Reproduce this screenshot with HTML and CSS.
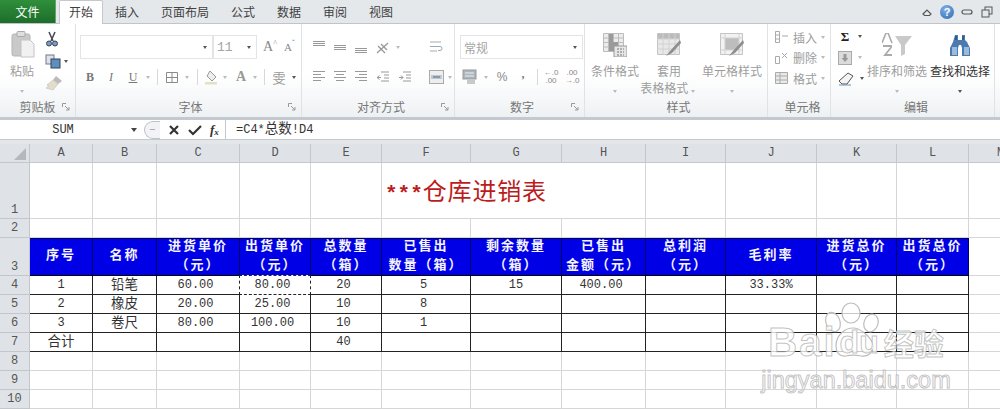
FILE: index.html

```html
<!DOCTYPE html>
<html lang="zh-CN">
<head>
<meta charset="UTF-8">
<title>仓库进销表</title>
<link rel="stylesheet" href="styles.css">
</head>
<body>

<div class="app">

    <!-- tabs -->
    <div class="tabbar">
        <div class="tab-file">文件</div>
        <div class="tab active">开始</div>
        <div class="tab">插入</div>
        <div class="tab">页面布局</div>
        <div class="tab">公式</div>
        <div class="tab">数据</div>
        <div class="tab">审阅</div>
        <div class="tab">视图</div>
        <div class="win-btns">
            <svg width="14" height="12" viewBox="0 0 14 12"><path d="M3 8l4-4 4 4-1.500 1.500H4.500z" fill="none" stroke="#555" stroke-width="1.200"/></svg>
            <div class="help">?</div>
            <svg width="14" height="12" viewBox="0 0 14 12"><rect x="2" y="4" width="10" height="4" rx="2" fill="none" stroke="#555" stroke-width="1.200"/></svg>
            <svg width="14" height="12" viewBox="0 0 14 12"><rect x="5" y="1" width="7" height="7" fill="none" stroke="#555"/><rect x="2" y="4" width="7" height="7" fill="#e4e8eb" stroke="#555"/></svg>
        </div>
    </div>

    <!-- ribbon -->
    <div class="ribbon">

        <div class="group g-clip">
            <div class="group-body">
                <div class="big big-paste">
                    <div class="big-icon">
                        <svg width="24" height="27" viewBox="0 0 24 27"><rect x="1" y="3" width="18" height="22" rx="2" fill="#c9c9c9" stroke="#b5b5b5"/><rect x="6" y="0.500" width="8" height="5" rx="1" fill="#dedede" stroke="#aaa"/><path d="M10 9h9l4 4v13H10z" fill="#f1f1f1" stroke="#c4c4c4"/></svg>
                    </div>
                    <div>粘贴</div>
                    <div class="caret-line"><span class="caret"></span></div>
                </div>
                <div class="clip-tools">
                    <div class="clip-row">
                        <svg width="14" height="16" viewBox="0 0 14 16"><path d="M4 1l4 9M10 1L6 10" stroke="#445" stroke-width="1.500" fill="none"/><circle cx="4" cy="12.500" r="2.500" fill="#7d9cc4" stroke="#345"/><circle cx="10" cy="12.500" r="2.500" fill="#7d9cc4" stroke="#345"/></svg>
                    </div>
                    <div class="clip-row">
                        <svg width="16" height="15" viewBox="0 0 16 15"><rect x="1" y="1" width="8" height="9" fill="#dde3ea" stroke="#778"/><rect x="6" y="5" width="9" height="9" fill="#5f8fc0" stroke="#345"/></svg>
                        <span class="caret dark"></span>
                    </div>
                    <div class="clip-row">
                        <svg width="18" height="16" viewBox="0 0 18 16"><path d="M11 1l6 5-4 3-5-4z" fill="#bbb"/><path d="M8 5l5 4-5 6-7-2 3-2-2-1z" fill="#e2dccb" stroke="#c4c0b2" stroke-width=".6"/></svg>
                    </div>
                </div>
            </div>
            <div class="group-label"><span></span><span>剪贴板</span><svg class="launcher" width="8" height="8" viewBox="0 0 8 8"><path d="M.5 4V.5H4M3 3l4 4M7 4v3H4" fill="none" stroke="#999"/></svg></div>
        </div>

        <div class="group g-font">
            <div class="group-body stack">
                <div class="row row-top">
                    <div class="combo c-font"><span class="caret dark"></span></div>
                    <div class="combo c-size"><span class="combo-text">11</span><span class="caret dark"></span></div>
                    <span class="glyph grow-a">A<sup>^</sup></span>
                    <span class="glyph shrink-a">A<sup>ˇ</sup></span>
                </div>
                <div class="row row-bot">
                    <span class="cell w20 serif-b">B</span>
                    <span class="cell w22 serif-i">I</span>
                    <span class="cell w22 serif-u">U</span>
                    <span class="cell w8"><span class="caret"></span></span>
                    <span class="cell w10"><span class="sep"></span></span>
                    <span class="cell w20"><svg width="14" height="13" viewBox="0 0 14 13"><path d="M1.500 1.500h11v10h-11zM7 1.500v10M1.500 6.500h11" fill="none" stroke="#8a8a8a"/></svg></span>
                    <span class="cell w10"><span class="caret"></span></span>
                    <span class="cell w10"><span class="sep"></span></span>
                    <span class="cell w18"><svg width="15" height="15" viewBox="0 0 15 15"><path d="M6 1l6 6-4 4-5-5z" fill="#eee" stroke="#999"/><rect x="1" y="12" width="12" height="2.500" fill="#e3e0c4"/></svg></span>
                    <span class="cell w10"><span class="caret"></span></span>
                    <span class="cell w22 a-big">A</span>
                    <span class="cell w6"><span class="caret"></span></span>
                    <span class="cell w12"><span class="sep"></span></span>
                    <span class="cell w18 wen">雯</span>
                    <span class="cell w12"><span class="caret dark"></span></span>
                </div>
            </div>
            <div class="group-label"><span></span><span>字体</span><svg class="launcher" width="8" height="8" viewBox="0 0 8 8"><path d="M.5 4V.5H4M3 3l4 4M7 4v3H4" fill="none" stroke="#999"/></svg></div>
        </div>

        <div class="group g-align">
            <div class="group-body">
                <div class="stack align-main">
                    <div class="row row-top">
                        <span class="cell w21"><span class="lines l-top"><i></i><i></i><i></i></span></span>
                        <span class="cell w21"><span class="lines l-mid"><i></i><i></i><i></i></span></span>
                        <span class="cell w22"><span class="lines l-bot"><i></i><i></i><i></i></span></span>
                        <span class="cell w22"><svg width="16" height="13" viewBox="0 0 16 13"><path d="M2 12L13 2M3 5l7 7M6 3l6 6" fill="none" stroke="#999" stroke-width="1.300"/></svg></span>
                        <span class="cell w8"><span class="caret"></span></span>
                    </div>
                    <div class="row row-bot">
                        <span class="cell w21"><span class="lines full"><i></i><i class="s"></i><i></i><i class="s"></i></span></span>
                        <span class="cell w21"><span class="lines full center"><i></i><i class="s"></i><i></i><i class="s"></i></span></span>
                        <span class="cell w22"><span class="lines full right"><i></i><i class="s"></i><i></i><i class="s"></i></span></span>
                        <span class="cell w22"><svg width="14" height="13" viewBox="0 0 14 13"><path d="M5 1h8M8 4h5M8 7h5M5 10h8M1 6.500h4M3.500 4.500L1 6.500l2.500 2" fill="none" stroke="#999"/></svg></span>
                        <span class="cell w21"><svg width="14" height="13" viewBox="0 0 14 13"><path d="M5 1h8M8 4h5M8 7h5M5 10h8M1 6.500h4M3 4.500l2 2-2 2" fill="none" stroke="#999"/></svg></span>
                    </div>
                </div>
                <span class="vsep"></span>
                <div class="stack align-side">
                    <div class="row row-top">
                        <span class="cell w20"><svg width="14" height="14" viewBox="0 0 14 14"><path d="M1 2h11M1 11h7" stroke="#aaa" fill="none"/><path d="M1 6.500h10a2 2 0 0 1 0 4H9" stroke="#9ab" fill="none"/></svg></span>
                    </div>
                    <div class="row row-bot">
                        <span class="cell w20"><svg width="15" height="14" viewBox="0 0 15 14"><rect x=".5" y=".5" width="14" height="13" fill="#eee" stroke="#aaa"/><rect x="2" y="5" width="11" height="4" fill="#b9c9d6"/><path d="M4 7h7" stroke="#667"/></svg></span>
                        <span class="cell w8"><span class="caret"></span></span>
                    </div>
                </div>
            </div>
            <div class="group-label"><span></span><span>对齐方式</span><svg class="launcher" width="8" height="8" viewBox="0 0 8 8"><path d="M.5 4V.5H4M3 3l4 4M7 4v3H4" fill="none" stroke="#999"/></svg></div>
        </div>

        <div class="group g-num">
            <div class="group-body stack">
                <div class="row row-top">
                    <div class="combo c-num"><span class="combo-text cjk">常规</span><span class="caret dark"></span></div>
                </div>
                <div class="row row-bot">
                    <span class="cell w20"><svg width="16" height="16" viewBox="0 0 16 16"><rect x="1" y="1" width="13" height="9" fill="#aab6bd" stroke="#999"/><path d="M3 4h9M3 7h9" stroke="#eee"/><rect x="5" y="10" width="8" height="5" fill="#c9c9c9"/></svg></span>
                    <span class="cell w12"><span class="caret"></span></span>
                    <span class="cell w20 percent">%</span>
                    <span class="cell w22 comma">,</span>
                    <span class="cell w6"><span class="sep"></span></span>
                    <span class="cell w22 dec">←.0<br>.00</span>
                    <span class="cell w20 dec">.00<br>→.0</span>
                </div>
            </div>
            <div class="group-label"><span></span><span>数字</span><svg class="launcher" width="8" height="8" viewBox="0 0 8 8"><path d="M.5 4V.5H4M3 3l4 4M7 4v3H4" fill="none" stroke="#999"/></svg></div>
        </div>

        <div class="group g-style">
            <div class="group-body">
                <div class="big b50">
                    <div class="big-icon">
                        <svg width="24" height="24" viewBox="0 0 24 24"><path d="M.5.500h20v18H.5zM.5 5h20M.5 9.500h20M.5 14h20M5.500.5v18M10.500.5v18M15.500.5v18" fill="#ececec" stroke="#bcbcbc"/><rect x="6" y="1" width="4" height="8" fill="#9a9a9a"/><rect x="6" y="9" width="9" height="9" fill="#9a9a9a"/><rect x="11" y="13" width="13" height="11" fill="#e6e6e6" stroke="#999"/><path d="M14 16h7M14 19h7M14 22h7" stroke="#777" stroke-dasharray="2 1"/></svg>
                    </div>
                    <div>条件格式</div>
                    <div class="caret-line"><span class="caret"></span></div>
                </div>
                <div class="big b58">
                    <div class="big-icon">
                        <svg width="24" height="24" viewBox="0 0 24 24"><path d="M.5.500h22v21H.5z" fill="#e8e8e8" stroke="#c4c4c4"/><rect x="1" y="1" width="21" height="5" fill="#bbb"/><path d="M.5 6h22M.5 11h22M.5 16h22M6 .5v21M12 .5v21M18 .5v21" fill="none" stroke="#d2d2d2"/><path d="M23 7L13 18l-4 5 6-3L24 10z" fill="#8e8e8e"/></svg>
                    </div>
                    <div>套用</div>
                    <div class="tight">表格格式 <span class="caret"></span></div>
                </div>
                <div class="big b68">
                    <div class="big-icon">
                        <svg width="24" height="24" viewBox="0 0 24 24"><path d="M.5.500h22v21H.5z" fill="#f2f2f2" stroke="#c4c4c4"/><rect x="5" y="5" width="14" height="12" fill="#bdbdbd"/><path d="M.5 5h22M.5 17h22M5 .5v21M19 .5v21" fill="none" stroke="#d2d2d2"/><path d="M23 7L13 18l-4 5 6-3L24 10z" fill="#8e8e8e"/></svg>
                    </div>
                    <div>单元格样式</div>
                    <div class="caret-line"><span class="caret"></span></div>
                </div>
            </div>
            <div class="group-label solo">样式</div>
        </div>

        <div class="group g-cells">
            <div class="group-body stack cell-list">
                <div class="cell-row">
                    <svg width="14" height="12" viewBox="0 0 14 12"><path d="M.5.500h4v11h-4zM.5 4h4M.5 8h4M7 5h6" fill="none" stroke="#aaa"/></svg>
                    <span>插入</span><span class="caret"></span>
                </div>
                <div class="cell-row">
                    <svg width="14" height="12" viewBox="0 0 14 12"><path d="M.5 4.500h4v7h-4zM7 1l5 5M12 1L7 6" fill="none" stroke="#aaa"/></svg>
                    <span>删除</span><span class="caret"></span>
                </div>
                <div class="cell-row">
                    <svg width="14" height="12" viewBox="0 0 14 12"><path d="M.5.500h12v11H.5zM.5 4h12M.5 8h12M5 .5v11" fill="#e9e9e9" stroke="#aaa"/></svg>
                    <span>格式</span><span class="caret"></span>
                </div>
            </div>
            <div class="group-label solo">单元格</div>
        </div>

        <div class="group g-edit">
            <div class="group-body">
                <div class="stack edit-tools">
                    <div class="edit-row"><span class="sigma">Σ</span><span class="caret dark"></span></div>
                    <div class="edit-row">
                        <svg width="14" height="14" viewBox="0 0 14 14"><rect x=".5" y=".5" width="13" height="13" fill="#dcdcdc" stroke="#aaa"/><path d="M5.500 3h3v4h2L7 11 3.500 7h2z" fill="#999"/></svg>
                        <span class="caret"></span>
                    </div>
                    <div class="edit-row">
                        <svg width="16" height="14" viewBox="0 0 16 14"><path d="M10 1l5 3-6 8H4L1 9z" fill="#f4f4f4" stroke="#555"/><path d="M1 13h12" stroke="#6d8fb5"/></svg>
                        <span class="caret dark"></span>
                    </div>
                </div>
                <div class="big b60">
                    <div class="big-icon">
                        <svg width="30" height="24" viewBox="0 0 30 24"><path d="M13 3h17l-7 9v9l-4 2V12z" fill="#c9c9c9"/><path d="M0 10L4 0h2l4 10" fill="none" stroke="#aaa" stroke-width="1.600"/><path d="M1 13h8v1.500L3 22h7" fill="none" stroke="#aaa" stroke-width="1.800"/></svg>
                    </div>
                    <div>排序和筛选</div>
                    <div class="caret-line"><span class="caret"></span></div>
                </div>
                <div class="big b62 on">
                    <div class="big-icon">
                        <svg width="24" height="22" viewBox="0 0 24 22"><path d="M7 0h3v5h4V0h3v5l2 2 3 6v8h-8v-8l-1-3h-2l-1 3v8H2v-8l3-6z" fill="#4b7ab0"/><path d="M4 12h5v8H4zM16 12h5v8h-5z" fill="#9bbbdc"/><path d="M8 1v4M15 1v4" stroke="#1c3c66"/></svg>
                    </div>
                    <div>查找和选择</div>
                    <div class="caret-line"><span class="caret dark"></span></div>
                </div>
            </div>
            <div class="group-label solo">编辑</div>
        </div>
    </div>

    <!-- formula bar -->
    <div class="fbar">
        <div class="namebox"><span class="name-text">SUM</span><span class="caret big-caret"></span></div>
        <div class="fbtns">
            <span class="fround"><i></i></span>
            <svg width="12" height="12" viewBox="0 0 12 12"><path d="M2 2l8 8M10 2l-8 8" stroke="#333" stroke-width="2.200"/></svg>
            <svg width="14" height="12" viewBox="0 0 14 12"><path d="M1 6l4 4 8-8" fill="none" stroke="#333" stroke-width="2.200"/></svg>
            <span class="fx">f<sub>x</sub></span>
        </div>
        <div class="formula">=C4*<span class="cn">总数</span>!D4</div>
    </div>

    <!-- sheet -->
    <div class="sheet">
        <table class="grid">
            <colgroup>
                <col class="c-rh"><col class="c-a"><col class="c-b"><col class="c-c"><col class="c-d"><col class="c-e"><col class="c-f"><col class="c-g"><col class="c-h"><col class="c-i"><col class="c-j"><col class="c-k"><col class="c-l"><col class="c-m">
            </colgroup>
            <tr class="r-head">
                <th class="corner"><span class="tri"></span></th>
                <th>A</th><th>B</th><th>C</th><th>D</th><th>E</th><th>F</th><th>G</th><th>H</th><th>I</th><th>J</th><th>K</th><th>L</th><th>M</th>
            </tr>
            <tr class="r-1">
                <th class="low">1</th>
                <td></td><td></td><td></td><td></td><td></td>
                <td colspan="3" class="title"><span class="stars">***</span>仓库进销表</td>
                <td></td><td></td><td></td><td></td><td></td>
            </tr>
            <tr class="r-2">
                <th>2</th>
                <td></td><td></td><td></td><td></td><td></td><td></td><td></td><td></td><td></td><td></td><td></td><td></td><td></td>
            </tr>
            <tr class="r-3">
                <th class="low">3</th>
                <td class="hd">序号</td>
                <td class="hd">名称</td>
                <td class="hd">进货单价<br>（元）</td>
                <td class="hd">出货单价<br>（元）</td>
                <td class="hd">总数量<br>（箱）</td>
                <td class="hd">已售出<br>数量（箱）</td>
                <td class="hd">剩余数量<br>（箱）</td>
                <td class="hd">已售出<br>金额（元）</td>
                <td class="hd">总利润<br>（元）</td>
                <td class="hd">毛利率</td>
                <td class="hd">进货总价<br>（元）</td>
                <td class="hd">出货总价<br>（元）</td>
                <td></td>
            </tr>
            <tr class="r-n">
                <th>4</th>
                <td class="d">1</td><td class="d cn">铅笔</td><td class="d n">60.00</td><td class="d n copied">80.00</td><td class="d n">20</td><td class="d n">5</td><td class="d">15</td><td class="d n">400.00</td><td class="d"></td><td class="d">33.33%</td><td class="d"></td><td class="d"></td><td></td>
            </tr>
            <tr class="r-n">
                <th>5</th>
                <td class="d">2</td><td class="d cn">橡皮</td><td class="d n">20.00</td><td class="d n">25.00</td><td class="d n">10</td><td class="d n">8</td><td class="d"></td><td class="d"></td><td class="d"></td><td class="d"></td><td class="d"></td><td class="d"></td><td></td>
            </tr>
            <tr class="r-n">
                <th>6</th>
                <td class="d">3</td><td class="d cn">卷尺</td><td class="d n">80.00</td><td class="d n">100.00</td><td class="d n">10</td><td class="d n">1</td><td class="d"></td><td class="d"></td><td class="d"></td><td class="d"></td><td class="d"></td><td class="d"></td><td></td>
            </tr>
            <tr class="r-n">
                <th>7</th>
                <td class="d cn">合计</td><td class="d"></td><td class="d"></td><td class="d"></td><td class="d n">40</td><td class="d"></td><td class="d"></td><td class="d"></td><td class="d"></td><td class="d"></td><td class="d"></td><td class="d"></td><td></td>
            </tr>
            <tr class="r-n"><th>8</th><td></td><td></td><td></td><td></td><td></td><td></td><td></td><td></td><td></td><td></td><td></td><td></td><td></td></tr>
            <tr class="r-n"><th>9</th><td></td><td></td><td></td><td></td><td></td><td></td><td></td><td></td><td></td><td></td><td></td><td></td><td></td></tr>
            <tr class="r-n"><th>10</th><td></td><td></td><td></td><td></td><td></td><td></td><td></td><td></td><td></td><td></td><td></td><td></td><td></td></tr>
        </table>

        <!-- watermark sits on top of the grid -->
        <div class="watermark">
            <svg class="paw" width="70" height="60" viewBox="0 0 70 60">
                <g fill="rgba(255,255,255,.75)" stroke="#bdbdbd" stroke-width="1.200">
                    <ellipse cx="13" cy="20" rx="7" ry="10" transform="rotate(-20 13 20)"/>
                    <ellipse cx="31" cy="11" rx="9" ry="10"/>
                    <ellipse cx="51" cy="21" rx="7" ry="9" transform="rotate(20 51 21)"/>
                    <path d="M16 44c0-12 10-18 17-18s17 8 20 16c2 9-6 13-12 12-5-1-11-1-15 0-7 1-10-4-10-10z"/>
                </g>
            </svg>
            <div class="wm-main"><span class="wm-bai">Bai</span><span class="wm-du">du</span><span class="wm-jy">经验</span></div>
            <div class="wm-url">jingyan.baidu.com</div>
        </div>
    </div>
</div>

</body>
</html>
```

FILE: styles.css

```css
* {
    box-sizing: border-box;
}
html, body {
    margin: 0;
    padding: 0;
    height: 100%;
    overflow: hidden;
}
body {
    font-family: "Noto Sans CJK SC", sans-serif;
    font-size: 12px;
    color: #444;
    background-color: #fff;
}
.app {
    width: 1000px;
    height: 409px;
    overflow: hidden;
    display: flex;
    flex-direction: column;
}

/* tabs */
.tabbar {
    height: 24px;
    display: flex;
    align-items: stretch;
    background-color: #e4e8eb;
    border-bottom: 1px solid #bfc5ca;
    flex: none;
}
.tab-file {
    width: 56px;
    margin-right: 3px;
    color: #fff;
    text-align: center;
    line-height: 23px;
    background: linear-gradient(#2f8f3c, #1d6e2a);
    border-right: 1px solid #6aa06f;
}
.tab {
    padding: 0 11px;
    line-height: 24px;
    color: #3f3f3f;
    white-space: nowrap;
}
.tab.active {
    width: 44px;
    padding: 0;
    margin-right: 1px;
    text-align: center;
    background-color: #fff;
    height: 25px;
    border: 1px solid #c4c9ce;
    border-bottom: 0;
    border-radius: 2px 2px 0 0;
    line-height: 22px;
}
.win-btns {
    margin-left: auto;
    display: flex;
    align-items: center;
    gap: 6px;
    padding-right: 6px;
}
.help {
    width: 14px;
    height: 14px;
    border-radius: 50%;
    background: radial-gradient(circle at 40% 30%, #7fb0e6, #2f69b3);
    color: #fff;
    font: bold 11px/14px "Liberation Sans", sans-serif;
    text-align: center;
}

/* ribbon */
.ribbon {
    height: 96px;
    flex: none;
    display: flex;
    background: linear-gradient(#fff 55%, #eef1f3);
    border-bottom: 3px solid #c3c9ce;
    color: #9c9c9c;
}
.group {
    display: flex;
    flex-direction: column;
    border-right: 1px solid #e0e3e6;
    flex: none;
}
.g-clip { width: 76px; }
.g-font { width: 226px; padding-left: 4px; }
.g-align { width: 153px; padding-left: 6px; }
.g-num { width: 130px; padding-left: 5px; }
.g-style { width: 183px; padding-left: 5px; }
.g-cells { width: 63px; padding-left: 7px; }
.g-edit { width: 164px; padding-left: 7px; }

.group-body {
    height: 73px;
    display: flex;
}
.stack {
    display: flex;
    flex-direction: column;
}
.group-label {
    height: 20px;
    display: grid;
    grid-template-columns: 1fr auto 1fr;
    align-items: center;
    line-height: 20px;
    color: #777;
    text-align: center;
}
.group-label.solo {
    display: block;
}
.launcher {
    justify-self: end;
    margin-right: 5px;
}

.row {
    display: flex;
    align-items: center;
}
.row-top {
    height: 24px;
    margin-top: 11px;
}
.row-bot {
    height: 24px;
    margin-top: 6px;
}
.cell {
    display: flex;
    align-items: center;
    justify-content: center;
    height: 24px;
    flex: none;
}
.w6 { width: 6px; }
.w8 { width: 8px; }
.w10 { width: 10px; }
.w12 { width: 12px; }
.w18 { width: 18px; }
.w20 { width: 20px; }
.w21 { width: 21px; }
.w22 { width: 22px; }

.caret {
    display: inline-block;
    width: 0;
    height: 0;
    border-left: 2.500px solid transparent;
    border-right: 2.500px solid transparent;
    border-top: 3px solid #bbb;
}
.caret.dark {
    border-top-color: #555;
}
.sep {
    width: 1px;
    height: 16px;
    background-color: #d8d8d8;
}
.vsep {
    width: 1px;
    height: 50px;
    margin: 11px 4px 0 7px;
    background-color: #d8d8d8;
}

.combo {
    height: 24px;
    background-color: #fff;
    border: 1px solid #e2e4e7;
    display: flex;
    align-items: center;
    justify-content: flex-end;
    padding: 0 5px;
}
.c-font { width: 133px; }
.c-size { width: 44px; justify-content: space-between; padding-left: 3px; }
.c-num { width: 123px; justify-content: space-between; padding-left: 3px; }
.combo-text {
    font-family: "Liberation Mono", monospace;
    font-size: 13px;
    color: #a5a5a5;
}
.combo-text.cjk {
    font-family: "Noto Sans CJK SC", sans-serif;
    font-size: 12px;
}
.glyph {
    font-family: "Liberation Serif", serif;
    color: #888;
    line-height: 1;
}
.glyph sup {
    font-size: 8px;
    vertical-align: 5px;
    line-height: 0;
}
.grow-a {
    font-size: 14px;
    margin-left: 6px;
    width: 21px;
}
.shrink-a {
    font-size: 11px;
    width: 14px;
}
.serif-b, .serif-i, .serif-u, .a-big {
    font-family: "Liberation Serif", serif;
    color: #777;
}
.serif-b { font-weight: bold; font-size: 12px; }
.serif-i { font-style: italic; font-size: 12px; }
.serif-u { text-decoration: underline; font-size: 12px; }
.a-big { font-size: 14px; font-weight: bold; color: #999; }
.wen { font-size: 13px; color: #999; }

/* align icons */
.lines {
    display: flex;
    flex-direction: column;
    gap: 1px;
    width: 12px;
    height: 12px;
}
.lines i {
    display: block;
    height: 1px;
    background-color: #999;
}
.lines.l-top { justify-content: flex-start; }
.lines.l-mid { justify-content: center; }
.lines.l-bot { justify-content: flex-end; }
.lines.full { gap: 2px; }
.lines.full i.s { width: 8px; }
.lines.center { align-items: center; }
.lines.center i { width: 12px; }
.lines.center i.s { width: 8px; }
.lines.right { align-items: flex-end; }
.lines.right i { width: 12px; }
.lines.right i.s { width: 8px; }

.percent {
    font-family: "Liberation Sans", sans-serif;
    color: #888;
}
.comma {
    font: bold 12px "Liberation Serif", serif;
    color: #777;
    padding-bottom: 5px;
}
.dec {
    flex-direction: column;
    font: 8px/8px "Liberation Sans", sans-serif;
    color: #888;
    display: block;
    padding-top: 4px;
    text-align: center;
}

/* big buttons */
.big {
    text-align: center;
    line-height: 17px;
    flex: none;
}
.big-icon {
    height: 38px;
    display: flex;
    align-items: flex-end;
    justify-content: center;
    padding-bottom: 5px;
}
.caret-line {
    height: 17px;
}
.tight {
    white-space: nowrap;
    margin-left: -3px;
}
.big-paste { width: 44px; }
.big-paste .big-icon { padding-left: 2px; padding-bottom: 4px; }
.b50 { width: 50px; }
.b58 { width: 58px; }
.b68 { width: 68px; }
.b60 { width: 60px; margin-left: 1px; font-size: 12px; }
.b62 { width: 62px; margin-left: 2px; white-space: nowrap; }
.big.on { color: #333; }

.clip-tools {
    width: 32px;
    padding-top: 4px;
}
.clip-row {
    height: 22px;
    display: flex;
    align-items: center;
    gap: 3px;
    padding-left: 1px;
}

.cell-list {
    padding-top: 3px;
}
.cell-row {
    height: 20.500px;
    display: flex;
    align-items: center;
    gap: 4px;
}
.edit-tools {
    width: 28px;
    padding-top: 2px;
}
.edit-row {
    height: 21px;
    display: flex;
    align-items: center;
    gap: 6px;
}
.sigma {
    width: 14px;
    text-align: center;
    font: bold 13px "Liberation Serif", serif;
    color: #222;
}

/* formula bar */
.fbar {
    height: 20px;
    flex: none;
    display: flex;
    align-items: center;
    background-color: #fff;
    border-bottom: 1px solid #c3c9ce;
}
.namebox {
    width: 144px;
    display: flex;
    align-items: center;
    padding-top: 1px;
    font-family: "Liberation Mono", monospace;
    color: #333;
}
.name-text {
    width: 126px;
    text-align: center;
}
.big-caret {
    margin-left: 5px;
    border-left-width: 3.500px;
    border-right-width: 3.500px;
    border-top: 4px solid #444;
}
.fbtns {
    width: 82px;
    height: 19px;
    display: flex;
    align-items: center;
    gap: 8px;
    border-right: 1px solid #c3c9ce;
}
.fround {
    width: 16px;
    height: 18px;
    border: 1px solid #bcc2c7;
    border-right: 0;
    border-radius: 9px 0 0 9px;
    display: flex;
    align-items: center;
    justify-content: center;
    background-color: #f1f3f5;
}
.fround i {
    width: 5px;
    height: 1px;
    background-color: #aab;
}
.fx {
    font: italic bold 13px/16px "Liberation Serif", serif;
    color: #333;
}
.fx sub {
    font-size: 9px;
    line-height: 0;
    vertical-align: -1px;
}
.formula {
    padding-left: 10px;
    padding-top: 1px;
    font-family: "Liberation Mono", "Noto Sans CJK SC", monospace;
    color: #333;
}
.formula .cn {
    font-size: 13.500px;
    line-height: 14px;
}

/* sheet */
.sheet {
    flex: 1;
    position: relative;
    overflow: hidden;
    padding-top: 4px;
    background-color: #e4e7ea;
}
.grid {
    table-layout: fixed;
    width: 1033px;
    border-collapse: separate;
    border-spacing: 0;
    background-color: #fff;
    font-family: "Liberation Mono", "Noto Sans CJK SC", monospace;
    font-size: 12px;
    color: #333;
}
.c-rh { width: 30px; }
.c-a { width: 63px; }
.c-b { width: 64px; }
.c-c { width: 83px; }
.c-d { width: 71px; }
.c-e { width: 71px; }
.c-f { width: 89px; }
.c-g { width: 91px; }
.c-h { width: 84px; }
.c-i { width: 80px; }
.c-j { width: 91px; }
.c-k { width: 80px; }
.c-l { width: 72px; }
.c-m { width: 64px; }

.r-head { height: 19px; }
.r-1 { height: 56px; }
.r-2 { height: 19px; }
.r-3 { height: 38px; }
.r-n { height: 19px; }

.grid th {
    padding: 0;
    font-weight: normal;
    color: #555;
    background-color: #dfe3e8;
    border-right: 1px solid #c3c7cb;
    border-bottom: 1px solid #c3c7cb;
    line-height: 16px;
    text-align: center;
    vertical-align: middle;
}
.grid th.low {
    vertical-align: bottom;
}
.tri {
    display: block;
    width: 0;
    height: 0;
    margin: 3px 3px 2px auto;
    border-left: 12px solid transparent;
    border-bottom: 12px solid #b4b9be;
}
.grid td {
    padding: 0;
    border-right: 1px solid #d6d6d6;
    border-bottom: 1px solid #d6d6d6;
    text-align: center;
    vertical-align: middle;
    line-height: 17px;
    overflow: hidden;
    white-space: nowrap;
}
.grid td.title {
    font-size: 24px;
    line-height: 30px;
    letter-spacing: .8px;
    color: #bb1c1c;
    text-align: left;
    padding: 8px 0 0 3px;
}
.stars {
    font-family: "Liberation Mono", monospace;
    font-size: 21px;
    font-weight: bold;
    letter-spacing: 0;
}
.grid td.hd {
    background-color: #0000e6;
    color: #f4f4ff;
    font-weight: bold;
    font-size: 13px;
    letter-spacing: 2px;
    line-height: 18.500px;
    box-shadow: inset 0 1px #000060;
    border-right: 1px solid #000060;
    border-bottom: 1px solid #000;
}
.grid td.d {
    font-size: 12px;
    border-right: 1px solid #222;
    border-bottom: 1px solid #222;
}
.grid td.cn {
    font-size: 13.500px;
}
.grid td.n {
    padding-right: 5px;
}
/* copied cell: marching ants over the black borders */
.grid td.copied {
    position: relative;
    overflow: visible;
}
.copied::before, .copied::after {
    content: "";
    position: absolute;
    top: -1px;
    left: -1px;
    right: -1px;
    bottom: -1px;
    pointer-events: none;
}
.copied::before {
    border: 1px solid #fff;
}
.copied::after {
    border: 1px dashed #222;
}

/* baidu watermark */
.watermark {
    position: absolute;
    left: 765px;
    top: 162px;
    width: 182px;
    height: 90px;
    display: flex;
    flex-direction: column;
    align-items: center;
    pointer-events: none;
    font-family: "Liberation Sans", sans-serif;
    color: rgba(255, 255, 255, .8);
    -webkit-text-stroke: 1px rgba(170, 170, 170, .7);
}
.paw {
    position: absolute;
    left: 55px;
    top: 0;
}
.wm-main {
    position: relative;
    margin-top: 23px;
    height: 36px;
    display: flex;
    align-items: flex-end;
    font-weight: bold;
    line-height: 34px;
    white-space: nowrap;
}
.wm-bai {
    font-size: 40px;
    letter-spacing: 2px;
}
.wm-du {
    font-size: 32px;
    margin-left: 3px;
}
.wm-jy {
    font-family: "Noto Sans CJK SC", sans-serif;
    font-size: 30px;
    margin-left: 5px;
}
.wm-url {
    position: relative;
    margin-top: 8px;
    font-size: 23.500px;
    line-height: 26px;
    white-space: nowrap;
}
```
